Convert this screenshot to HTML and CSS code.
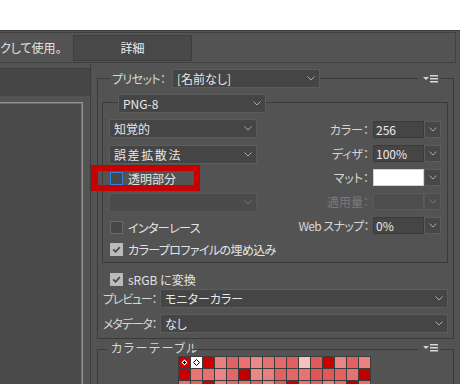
FILE: index.html
```html
<!DOCTYPE html>
<html lang="ja">
<head>
<meta charset="utf-8">
<title>Save for Web</title>
<link rel="stylesheet" href="styles.css">
</head>
<body>
<div class="page">
  <div class="topwhite"></div>
  <div class="toolbar">
    <div class="tbox">
      <div class="tb-text">クして使用。</div>
      <div class="tb-btn">詳細</div>
    </div>
  </div>
  <div class="main">
    <div class="left">
      <div class="darkbox"></div>
      <div class="frame"></div>
    </div>
    <div class="right">
      <div class="grp">
        <div class="ghead">
          <div class="seg seg-first w13"></div>
          <div class="glabel preset-label">プリセット：</div>
          <div class="sel sel-preset"><span>[名前なし]</span><svg class="chev" width="8" height="5" viewBox="0 0 8 5"><path d="M0.5 0.5 L4 4 L7.5 0.5"/></svg></div>
          <div class="seg seg-fill"></div>
          <div class="menuicon"><svg width="15" height="8" viewBox="0 0 15 8"><polygon points="0,2 6,2 3,5"/><rect x="7" y="0" width="8" height="1.5"/><rect x="7" y="3" width="8" height="1.5"/><rect x="7" y="6" width="8" height="1.5"/></svg></div>
          <div class="seg seg-last w13"></div>
        </div>
        <div class="gbody outer-body">
          <div class="inner">
            <div class="ghead ghead-inner">
              <div class="seg seg-first seg-in w16"></div>
              <div class="sel sel-png"><span>PNG-8</span><svg class="chev" width="8" height="5" viewBox="0 0 8 5"><path d="M0.5 0.5 L4 4 L7.5 0.5"/></svg></div>
              <div class="seg seg-fill seg-in seg-last"></div>
            </div>
            <div class="gbody inner-body">
              <div class="lcol">
                <div class="sel sel-l"><span>知覚的</span><svg class="chev" width="8" height="5" viewBox="0 0 8 5"><path d="M0.5 0.5 L4 4 L7.5 0.5"/></svg></div>
                <div class="sel sel-l mt7"><span class="wide-k">誤差拡散法</span><svg class="chev" width="8" height="5" viewBox="0 0 8 5"><path d="M0.5 0.5 L4 4 L7.5 0.5"/></svg></div>
                <div class="cbrow mt8"><div class="cb cb-blue"></div><span>透明部分</span></div>
                <div class="sel sel-l sel-dis mt8"><span></span><svg class="chev" width="8" height="5" viewBox="0 0 8 5"><path d="M0.5 0.5 L4 4 L7.5 0.5"/></svg></div>
                <div class="cbrow mt9"><div class="cb"></div><span class="kana">インターレース</span></div>
                <div class="cbrow mt9"><div class="cb cb-on"><svg width="11" height="11" viewBox="0 0 11 11"><path d="M2.2 5.4 L4.6 7.8 L8.8 3.2"/></svg></div><span class="kana">カラープロファイルの埋め込み</span></div>
              </div>
              <div class="rcol">
                <div class="frow"><span class="flabel">カラー：</span><div class="fld"><div class="fld-text">256</div><div class="fld-btn"><svg class="chev" width="8" height="5" viewBox="0 0 8 5"><path d="M0.5 0.5 L4 4 L7.5 0.5"/></svg></div></div></div>
                <div class="frow"><span class="flabel">ディザ：</span><div class="fld"><div class="fld-text">100%</div><div class="fld-btn"><svg class="chev" width="8" height="5" viewBox="0 0 8 5"><path d="M0.5 0.5 L4 4 L7.5 0.5"/></svg></div></div></div>
                <div class="frow"><span class="flabel">マット：</span><div class="fld"><div class="fld-text fld-white"></div><div class="fld-btn"><svg class="chev" width="8" height="5" viewBox="0 0 8 5"><path d="M0.5 0.5 L4 4 L7.5 0.5"/></svg></div></div></div>
                <div class="frow"><span class="flabel flabel-dis">適用量：</span><div class="fld fld-dis"><div class="fld-text"></div><div class="fld-btn"><svg class="chev" width="8" height="5" viewBox="0 0 8 5"><path d="M0.5 0.5 L4 4 L7.5 0.5"/></svg></div></div></div>
                <div class="frow"><span class="flabel kana">Web スナップ：</span><div class="fld"><div class="fld-text">0%</div><div class="fld-btn"><svg class="chev" width="8" height="5" viewBox="0 0 8 5"><path d="M0.5 0.5 L4 4 L7.5 0.5"/></svg></div></div></div>
              </div>
            </div>
          </div>
          <div class="cbrow srgb"><div class="cb cb-on"><svg width="11" height="11" viewBox="0 0 11 11"><path d="M2.2 5.4 L4.6 7.8 L8.8 3.2"/></svg></div><span>sRGB に変換</span></div>
          <div class="srow srow-first"><span class="slabel">プレビュー：</span><div class="sel sel-wide"><span>モニターカラー</span><svg class="chev" width="8" height="5" viewBox="0 0 8 5"><path d="M0.5 0.5 L4 4 L7.5 0.5"/></svg></div></div>
          <div class="srow srow-second"><span class="slabel">メタデータ：</span><div class="sel sel-wide"><span>なし</span><svg class="chev" width="8" height="5" viewBox="0 0 8 5"><path d="M0.5 0.5 L4 4 L7.5 0.5"/></svg></div></div>
        </div>
      </div>
      <div class="grp grp-ct">
        <div class="ghead ghead-ct">
          <div class="seg seg-first seg-ct w10"></div>
          <div class="glabel ct-label">カラーテーブル</div>
          <div class="seg seg-fill seg-ct"></div>
          <div class="menuicon"><svg width="15" height="8" viewBox="0 0 15 8"><polygon points="0,2 6,2 3,5"/><rect x="7" y="0" width="8" height="1.5"/><rect x="7" y="3" width="8" height="1.5"/><rect x="7" y="6" width="8" height="1.5"/></svg></div>
          <div class="seg seg-last seg-ct w13"></div>
        </div>
        <div class="gbody ct-body">
          <div class="ctgrid">
            <div class="cell" style="background:#c80000"><svg width="11" height="11" viewBox="0 0 11 11"><path class="mk-w" d="M5.5 2.5 L8.5 5.5 L5.5 8.5 L2.5 5.5 Z"/><path class="mk-b" d="M5.5 4 V7 M4 5.5 H7"/></svg></div>
            <div class="cell" style="background:#ffffff"><svg width="11" height="11" viewBox="0 0 11 11"><path class="mk-o" d="M5.5 2.5 L8.5 5.5 L5.5 8.5 L2.5 5.5 Z"/></svg></div>
            <div class="cell" style="background:#c80000"></div>
            <div class="cell" style="background:#e88080"></div>
            <div class="cell" style="background:#e06262"></div>
            <div class="cell" style="background:#e87272"></div>
            <div class="cell" style="background:#eb8888"></div>
            <div class="cell" style="background:#e57070"></div>
            <div class="cell" style="background:#e26a6a"></div>
            <div class="cell" style="background:#e06060"></div>
            <div class="cell" style="background:#f5c0c0"></div>
            <div class="cell" style="background:#e05a5a"></div>
            <div class="cell" style="background:#c80000"></div>
            <div class="cell" style="background:#e98585"></div>
            <div class="cell" style="background:#e06262"></div>
            <div class="cell" style="background:#e98282"></div>
            <div class="cell" style="background:#c80000"></div>
            <div class="cell" style="background:#e87474"></div>
            <div class="cell" style="background:#e87070"></div>
            <div class="cell" style="background:#ea8585"></div>
            <div class="cell" style="background:#e06868"></div>
            <div class="cell" style="background:#c00000"></div>
            <div class="cell" style="background:#ea8888"></div>
            <div class="cell" style="background:#e88080"></div>
            <div class="cell" style="background:#e06262"></div>
            <div class="cell" style="background:#e06868"></div>
            <div class="cell" style="background:#e57575"></div>
            <div class="cell" style="background:#e05555"></div>
            <div class="cell" style="background:#e05858"></div>
            <div class="cell" style="background:#e06262"></div>
            <div class="cell" style="background:#e57272"></div>
            <div class="cell" style="background:#c00000"></div>
            <div class="cell" style="background:#e57070"></div>
            <div class="cell" style="background:#e06262"></div>
            <div class="cell" style="background:#c80000"></div>
            <div class="cell" style="background:#e88080"></div>
            <div class="cell" style="background:#e06868"></div>
            <div class="cell" style="background:#e57575"></div>
            <div class="cell" style="background:#e06060"></div>
            <div class="cell" style="background:#ea8585"></div>
            <div class="cell" style="background:#e05858"></div>
            <div class="cell" style="background:#c80000"></div>
            <div class="cell" style="background:#e87272"></div>
            <div class="cell" style="background:#e06262"></div>
            <div class="cell" style="background:#e88080"></div>
            <div class="cell" style="background:#e26a6a"></div>
            <div class="cell" style="background:#c00000"></div>
            <div class="cell" style="background:#e57070"></div>
          </div>
        </div>
      </div>
    </div>
  </div>
  <div class="redmark"></div>
</div>
</body>
</html>
```

FILE: styles.css
```css
html, body {
  margin: 0;
  padding: 0;
}
body {
  font-family: "Noto Sans CJK JP", "Noto Sans", sans-serif;
  font-size: 12px;
  line-height: 14px;
  font-feature-settings: "palt";
  color: #e2e2e2;
}
.kana {
  letter-spacing: -0.6px;
}
.wide-k {
  letter-spacing: 1.6px;
}
.page {
  position: relative;
  width: 460px;
  height: 384px;
  overflow: hidden;
  background: #535353;
}
.topwhite {
  height: 30px;
  background: #ffffff;
}
.toolbar {
  height: 34px;
  box-sizing: border-box;
  border-top: 1px solid #3b3b3b;
  padding-top: 1px;
}
.tbox {
  margin-left: -1px;
  width: 457px;
  height: 31px;
  box-sizing: border-box;
  border: 1px solid #414141;
  display: flex;
  align-items: flex-start;
}
.tb-text {
  width: 73px;
  height: 29px;
  display: flex;
  align-items: center;
  white-space: nowrap;
  overflow: hidden;
  color: #e4e4e4;
}
.tb-btn {
  margin-top: 2px;
  width: 119px;
  height: 26px;
  box-sizing: border-box;
  border: 1px solid #3e3e3e;
  background: #484848;
  display: flex;
  align-items: center;
  justify-content: center;
  color: #ececec;
}
.main {
  display: flex;
  height: 320px;
}
.left {
  width: 91px;
  box-sizing: border-box;
  border-right: 1px solid #3c3c3c;
  padding-top: 4px;
  display: flex;
  flex-direction: column;
}
.darkbox {
  height: 28px;
  box-sizing: border-box;
  background: #464646;
  border-top: 1px solid #3c3c3c;
}
.frame {
  margin-top: 6px;
  margin-left: -3px;
  width: 86px;
  flex: 1;
  box-sizing: border-box;
  border-top: 1px solid #929292;
  border-right: 1px solid #929292;
  box-shadow: inset -1px 1px 0 #6e6e6e;
  background: #4b4b4b;
}
.right {
  flex: 1;
  padding: 5px 6px 0 6px;
}
.ghead {
  display: flex;
  align-items: center;
  height: 19px;
}
.seg {
  align-self: flex-end;
  height: 10px;
  box-sizing: border-box;
  border-top: 1px solid #3b3b3b;
}
.seg-in {
  height: 11px;
}
.seg-ct {
  height: 7px;
}
.seg-first {
  border-left: 1px solid #3b3b3b;
}
.seg-last {
  border-right: 1px solid #3b3b3b;
}
.seg-fill {
  flex: 1;
}
.w10 { width: 10px; }
.w13 { width: 13px; }
.w16 { width: 16px; }
.glabel {
  box-sizing: border-box;
  white-space: nowrap;
  color: #d6d6d6;
}
.preset-label {
  width: 62px;
  padding-left: 2px;
  letter-spacing: -0.6px;
}
.menuicon {
  width: 23px;
  box-sizing: border-box;
  padding-left: 5px;
  display: flex;
  align-items: center;
}
.menuicon svg {
  fill: #d8d8d8;
}
.sel {
  height: 19px;
  box-sizing: border-box;
  border: 1px solid #5c5c5c;
  background: #454545;
  display: flex;
  align-items: center;
  justify-content: space-between;
  padding: 0 4px 0 4px;
  color: #e8e8e8;
  white-space: nowrap;
}
.chev {
  flex: none;
}
.chev path {
  fill: none;
  stroke: #a8a8a8;
  stroke-width: 1;
}
.sel-preset {
  width: 148px;
}
.sel-png {
  width: 148px;
}
.gbody {
  border-left: 1px solid #3b3b3b;
  border-right: 1px solid #3b3b3b;
  border-bottom: 1px solid #3b3b3b;
}
.outer-body {
  padding: 6px 5px 5px 4px;
}
.ghead-inner {
  height: 19px;
}
.inner-body {
  display: flex;
  padding: 6px 6px 6px 6px;
}
.lcol {
  width: 148px;
  display: flex;
  flex-direction: column;
}
.sel-l {
  width: 148px;
}
.sel-dis {
  background: #4b4b4b;
  border-color: #575757;
}
.sel-dis .chev path {
  stroke: #787878;
}
.mt7 { margin-top: 7px; }
.mt8 { margin-top: 8px; }
.mt9 { margin-top: 9px; }
.cbrow {
  display: flex;
  align-items: center;
  height: 13px;
  padding-left: 1px;
  gap: 5px;
  white-space: nowrap;
  color: #e4e4e4;
}
.cb {
  width: 13px;
  height: 13px;
  flex: none;
  box-sizing: border-box;
  border: 1px solid #6a6a6a;
  background: #474747;
  display: flex;
  align-items: center;
  justify-content: center;
}
.cb-blue {
  border-color: #2f82e4;
  background: #474747;
}
.cb-on {
  border-color: #b8b8b8;
  background: #bcbcbc;
}
.cb-on svg path {
  fill: none;
  stroke: #4a4a4a;
  stroke-width: 1.8;
}
.rcol {
  flex: 1;
  display: flex;
  flex-direction: column;
  align-items: flex-end;
  gap: 7px;
  padding-top: 2px;
}
.frow {
  display: flex;
  align-items: center;
  height: 17px;
  gap: 4px;
  white-space: nowrap;
}
.flabel {
  color: #d6d6d6;
}
.flabel-dis {
  color: #7b7b7b;
}
.fld {
  display: flex;
  height: 17px;
}
.fld-text {
  width: 51px;
  height: 17px;
  box-sizing: border-box;
  border: 1px solid #3a3a3a;
  background: #454545;
  padding-left: 2px;
  display: flex;
  align-items: center;
  color: #eaeaea;
}
.fld-white {
  background: #ffffff;
  border-color: #d0d0d0;
}
.fld-btn {
  width: 17px;
  height: 17px;
  box-sizing: border-box;
  border: 1px solid #5e5e5e;
  background: #474747;
  display: flex;
  align-items: center;
  justify-content: center;
}
.fld-dis .fld-text {
  background: #4d4d4d;
  border-color: #5a5a5a;
}
.fld-dis .fld-btn {
  background: #4d4d4d;
  border-color: #5a5a5a;
}
.fld-dis .chev path {
  stroke: #7a7a7a;
}
.srgb {
  margin-top: 10px;
  padding-left: 8px;
}
.srow {
  display: flex;
  align-items: center;
  justify-content: space-between;
  padding-left: 1px;
}
.srow-first {
  margin-top: 3px;
}
.srow-second {
  margin-top: 6px;
}
.slabel {
  flex: none;
  white-space: nowrap;
  letter-spacing: -1.2px;
  color: #d6d6d6;
}
.sel-wide {
  flex: none;
  width: 288px;
}
.grp-ct {
  margin-top: 1px;
}
.ghead-ct {
  height: 16px;
}
.ct-label {
  width: 84px;
  padding-left: 4px;
  letter-spacing: 1.6px;
}
.ct-body {
  border-bottom: none;
  height: 40px;
  padding-left: 80px;
}
.ctgrid {
  display: grid;
  grid-template-columns: repeat(16, 11px);
  grid-auto-rows: 11px;
  gap: 1px;
  padding: 1px;
  background: #3d3d3d;
  width: max-content;
}
.cell {
  width: 11px;
  height: 11px;
}
.cell svg {
  display: block;
}
.mk-w {
  fill: #ffffff;
}
.mk-b {
  fill: none;
  stroke: #000000;
  stroke-width: 1;
}
.mk-o {
  fill: #ffffff;
  stroke: #000000;
  stroke-width: 1;
}
.redmark {
  position: absolute;
  left: 91px;
  top: 165px;
  width: 109px;
  height: 26px;
  box-sizing: border-box;
  border: 6px solid #c90000;
}
```
